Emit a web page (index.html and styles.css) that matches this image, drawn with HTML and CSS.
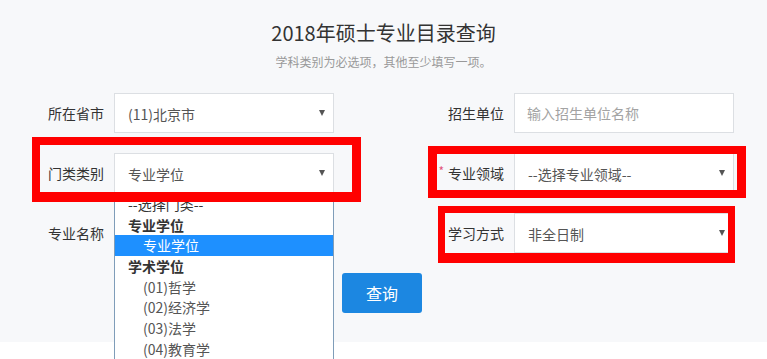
FILE: index.html
```html
<!DOCTYPE html>
<html lang="zh-CN">
<head>
<meta charset="utf-8">
<title>2018年硕士专业目录查询</title>
<link rel="stylesheet" href="styles.css">
</head>
<body>
<div class="page">
  <h1 class="title">2018年硕士专业目录查询</h1>
  <p class="subtitle">学科类别为必选项，其他至少填写一项。</p>
  <div class="form">
    <div class="group">
      <label class="label">所在省市</label>
      <div class="select"><span class="value">(11)北京市</span><span class="arrow"></span></div>
    </div>
    <div class="group">
      <label class="label">招生单位</label>
      <div class="input"><span class="placeholder">输入招生单位名称</span></div>
    </div>
    <div class="group">
      <label class="label">门类类别</label>
      <div class="select open"><span class="value">专业学位</span><span class="arrow"></span>
        <ul class="options">
          <li class="opt group-opt">--选择门类--</li>
          <li class="opt group-label">专业学位</li>
          <li class="opt child selected">专业学位</li>
          <li class="opt group-label">学术学位</li>
          <li class="opt child">(01)哲学</li>
          <li class="opt child">(02)经济学</li>
          <li class="opt child">(03)法学</li>
          <li class="opt child">(04)教育学</li>
        </ul>
      </div>
    </div>
    <div class="group">
      <label class="label"><span class="req">*</span>专业领域</label>
      <div class="select"><span class="value">--选择专业领域--</span><span class="arrow"></span></div>
    </div>
    <div class="group">
      <label class="label">专业名称</label>
      <div class="input"></div>
    </div>
    <div class="group">
      <label class="label">学习方式</label>
      <div class="select"><span class="value">非全日制</span><span class="arrow"></span></div>
    </div>
  </div>
  <div class="actions">
    <button class="btn" type="button">查询</button>
  </div>
</div>
<div class="mark mark-1"></div>
<div class="mark mark-2"></div>
<div class="mark mark-3"></div>
</body>
</html>
```

FILE: styles.css
```css
* { box-sizing: border-box; }
html, body { margin: 0; padding: 0; background: #fff; }
body {
  position: relative;
  font-family: "Noto Sans CJK SC", "Noto Sans", sans-serif;
  color: #333;
  overflow: hidden;
  height: 359px;
}
.page {
  background: #f7f8fa;
  padding: 19px 0 29px;
}
.title {
  margin: 0;
  font-size: 20px;
  font-weight: 400;
  line-height: 28px;
  text-align: center;
  color: #333;
}
.subtitle {
  margin: 6px 0 0;
  font-size: 12px;
  line-height: 18px;
  text-align: center;
  color: #999;
}
.form {
  margin-top: 22px;
  padding-left: 14px;
  display: grid;
  grid-template-columns: 320px 320px;
  column-gap: 80px;
  row-gap: 20px;
}
.group {
  display: flex;
  align-items: center;
  gap: 10px;
  height: 40px;
}
.label {
  width: 90px;
  text-align: right;
  font-size: 14px;
  line-height: 20px;
  color: #333;
}
.req {
  color: #e2557c;
  font-size: 12px;
  margin-right: 4px;
  position: relative;
  top: -3px;
}
.select, .input {
  position: relative;
  width: 220px;
  height: 40px;
  background: #fff;
  border: 1px solid #dcdfe3;
  display: flex;
  align-items: center;
  justify-content: space-between;
  padding: 0 7px 0 13px;
  font-size: 14px;
  color: #555;
}
.input { padding-left: 12px; }
.value { line-height: 20px; padding-top: 2px; }
.placeholder { color: #a3a3a3; line-height: 20px; }
.arrow {
  width: 0;
  height: 0;
  border-left: 3.5px solid transparent;
  border-right: 3.5px solid transparent;
  border-top: 6px solid #555;
  margin-right: 1px;
}
.options {
  position: absolute;
  left: -1px;
  top: 39px;
  width: 220px;
  height: 166px;
  margin: 0;
  padding: 0;
  list-style: none;
  background: #fff;
  border: 1px solid #7f9db9;
  border-bottom: 0;
  overflow: hidden;
  z-index: 5;
}
.opt {
  height: 20.67px;
  line-height: 20.67px;
  font-size: 14px;
  padding-left: 13px;
  color: #333;
  white-space: nowrap;
}
.group-label { font-weight: 700; color: #333; }
.child { padding-left: 28px; color: #555; }
.selected { background: #1e90ff; color: #fff; }
.actions {
  margin-top: 20px;
  display: flex;
  justify-content: center;
}
.btn {
  width: 80px;
  height: 40px;
  border: 0;
  border-radius: 3px;
  background: #1c87e1;
  color: #fff;
  font-family: inherit;
  font-size: 16px;
  margin-left: -3px;
}
.mark {
  position: absolute;
  border: 8px solid #ff0000;
  z-index: 10;
}
.mark-1 { left: 32px; top: 137px; width: 329px; height: 65px; border-width: 8px 9px 10px 8px; }
.mark-2 { left: 428px; top: 146px; width: 318px; height: 52px; border-width: 8px 9px 8px 9px; }
.mark-3 { left: 438px; top: 206px; width: 297px; height: 57px; border-width: 7px 7px 10px 7px; }
```
